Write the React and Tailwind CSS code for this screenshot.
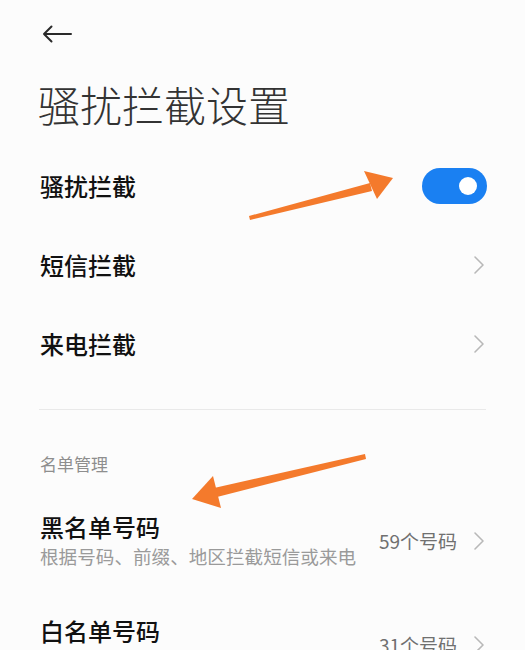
const font = { fontFamily: '"Noto Sans CJK SC", "Noto Sans", sans-serif' };

function Chevron() {
  return (
    <svg width="12" height="20" viewBox="0 0 12 20" fill="none" className="shrink-0">
      <path d="M2 2 L10 10 L2 18" stroke="#b8b8b8" strokeWidth="1.6" strokeLinecap="round" strokeLinejoin="round" />
    </svg>
  );
}

function NavRow({ label }) {
  return (
    <div className="flex h-[79px] items-center justify-between pl-[40px] pr-[40px]">
      <span className="text-[24px] font-medium leading-[30px] text-[#111]">{label}</span>
      <Chevron />
    </div>
  );
}

function ListRow({ title, desc, count }) {
  return (
    <div className="flex items-center justify-between pl-[40px] pr-[40px]">
      <div className="flex flex-col">
        <span className="text-[24px] font-medium leading-[30px] text-[#111]">{title}</span>
        <span className="mt-px text-[18.6px] leading-[26px] text-[#9a9a9a]">{desc}</span>
      </div>
      <div className="flex items-center gap-[16px]">
        <span className="text-[19px] leading-[26px] text-[#707070]">{count}</span>
        <Chevron />
      </div>
    </div>
  );
}

export default function App() {
  return (
    <div className="relative h-[650px] w-full overflow-hidden bg-[#fcfcfc]" style={font}>
      <div className="flex h-[68px] items-center pl-[42px]">
        <svg width="30" height="18" viewBox="0 0 30 18" fill="none">
          <path d="M29 9 H2 M9.5 1.5 L2 9 L9.5 16.5" stroke="#2a2a2a" strokeWidth="2" strokeLinecap="round" strokeLinejoin="round" />
        </svg>
      </div>

      <h1 className="mt-[15px] pl-[38px] text-[42px] font-light leading-[42px] text-[#333]">骚扰拦截设置</h1>

      <div className="mt-[21px]">
        <div className="flex h-[79px] items-center justify-between pl-[40px] pr-[38px]">
          <span className="text-[24px] font-medium leading-[30px] text-[#111]">骚扰拦截</span>
          <div className="flex h-[36px] w-[65px] items-center justify-end rounded-full bg-[#1a80f2] pr-[10px]">
            <div className="h-[18px] w-[18px] rounded-full bg-white" />
          </div>
        </div>
        <NavRow label="短信拦截" />
        <NavRow label="来电拦截" />
      </div>

      <div className="mx-[39px] mt-[26px] h-px bg-[#e9e9e9]" />

      <div className="mt-[42px] pl-[40px] text-[17px] leading-[24px] text-[#8e8e8e]">名单管理</div>

      <div className="mt-[36px]">
        <ListRow title="黑名单号码" desc="根据号码、前缀、地区拦截短信或来电" count="59个号码" />
      </div>
      <div className="mt-[47px]">
        <ListRow title="白名单号码" desc="不拦截来自这些号码的短信或来电" count="31个号码" />
      </div>

      <svg className="pointer-events-none absolute left-0 top-0" width="525" height="650" viewBox="0 0 525 650">
        <polygon points="249,216 250,220 372,191 370,183" fill="#f47a2c" />
        <polygon points="393,178 364,171 377,199" fill="#f47a2c" />
        <polygon points="365,454 366,459 217,497 214,488" fill="#f47a2c" />
        <polygon points="192,499 213,476 221,508" fill="#f47a2c" />
      </svg>
    </div>
  );
}
